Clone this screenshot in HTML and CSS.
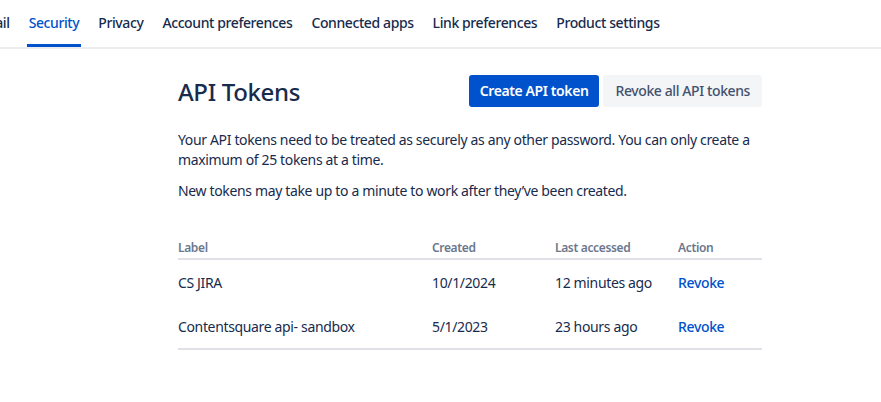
FILE: index.html
```html
<!DOCTYPE html>
<html lang="en">
<head>
    <meta charset="UTF-8">
    <meta name="viewport" content="width=device-width, initial-scale=1.0">
    <title>API Tokens</title>
    <link rel="stylesheet" href="styles.css">
</head>
<body>

<nav class="tabs">
    <a class="tab tab-cut" href="#">Email</a>
    <a class="tab active" href="#">Security</a>
    <a class="tab" href="#">Privacy</a>
    <a class="tab" href="#">Account preferences</a>
    <a class="tab" href="#">Connected apps</a>
    <a class="tab" href="#">Link preferences</a>
    <a class="tab" href="#">Product settings</a>
</nav>

<main class="content">
    <div class="header">
        <h1>API Tokens</h1>
        <div class="actions">
            <button class="btn btn-primary">Create API token</button>
            <button class="btn btn-subtle">Revoke all API tokens</button>
        </div>
    </div>

    <p>Your API tokens need to be treated as securely as any other password. You can only create a maximum of 25 tokens at a time.</p>
    <p>New tokens may take up to a minute to work after they’ve been created.</p>

    <table class="tokens">
        <thead>
            <tr>
                <th class="col-label">Label</th>
                <th class="col-created">Created</th>
                <th class="col-accessed">Last accessed</th>
                <th>Action</th>
            </tr>
        </thead>
        <tbody>
            <tr>
                <td>CS JIRA</td>
                <td>10/1/2024</td>
                <td>12 minutes ago</td>
                <td><a class="revoke" href="#">Revoke</a></td>
            </tr>
            <tr>
                <td>Contentsquare api- sandbox</td>
                <td>5/1/2023</td>
                <td>23 hours ago</td>
                <td><a class="revoke" href="#">Revoke</a></td>
            </tr>
        </tbody>
    </table>
</main>

</body>
</html>
```

FILE: styles.css
```css
body {
    font-family: "Noto Sans", "Open Sans", sans-serif;
    margin: 0;
    padding: 0;
    background-color: #fff;
    color: #172b4d;
    font-size: 14px;
    letter-spacing: -0.35px;
}

.tabs {
    display: flex;
    gap: 15px;
    height: 47px;
    border-bottom: 2px solid #ebecf0;
    overflow: hidden;
    margin-left: -27px;
}

.tab {
    display: flex;
    align-items: center;
    height: 47px;
    padding: 0 2px;
    box-sizing: border-box;
    color: #172b4d;
    text-decoration: none;
    font-weight: 500;
    font-size: 14px;
    letter-spacing: -0.4px;
    border-bottom: 3px solid transparent;
    margin-bottom: -1px;
}

.tab.active {
    color: #0052cc;
    border-bottom-color: #0052cc;
}

.content {
    width: 584px;
    margin: 0 0 0 178px;
    padding-top: 24px;
}

.header {
    display: flex;
    justify-content: space-between;
    align-items: center;
    margin-bottom: 22px;
}

h1 {
    font-size: 24px;
    font-weight: 500;
    margin: 0;
    padding-top: 2px;
}

.actions {
    display: flex;
    gap: 4px;
}

.btn {
    font-family: inherit;
    font-size: 14px;
    font-weight: 600;
    letter-spacing: -0.4px;
    height: 32px;
    padding: 0 12px;
    border: none;
    border-radius: 3px;
    cursor: pointer;
}

.btn-primary {
    background-color: #0052cc;
    color: #fff;
    padding: 0 11px;
}

.btn-subtle {
    background-color: #f4f5f7;
    color: #42526e;
    font-weight: 500;
}

p {
    margin: 0 0 11px;
    line-height: 20px;
}

.tokens {
    width: 100%;
    border-collapse: collapse;
    margin-top: 34px;
}

.tokens th {
    text-align: left;
    font-size: 12px;
    font-weight: 600;
    color: #6b778c;
    padding: 4px 0 2px;
    border-bottom: 2px solid #dfe1e6;
}

.col-label { width: 254px; }
.col-created { width: 123px; }
.col-accessed { width: 123px; }

.tokens td {
    height: 44px;
    padding: 0;
    vertical-align: middle;
}

.tokens tbody tr:last-child td {
    border-bottom: 2px solid #dfe1e6;
}

.revoke {
    color: #0052cc;
    text-decoration: none;
    font-weight: 500;
}
```
